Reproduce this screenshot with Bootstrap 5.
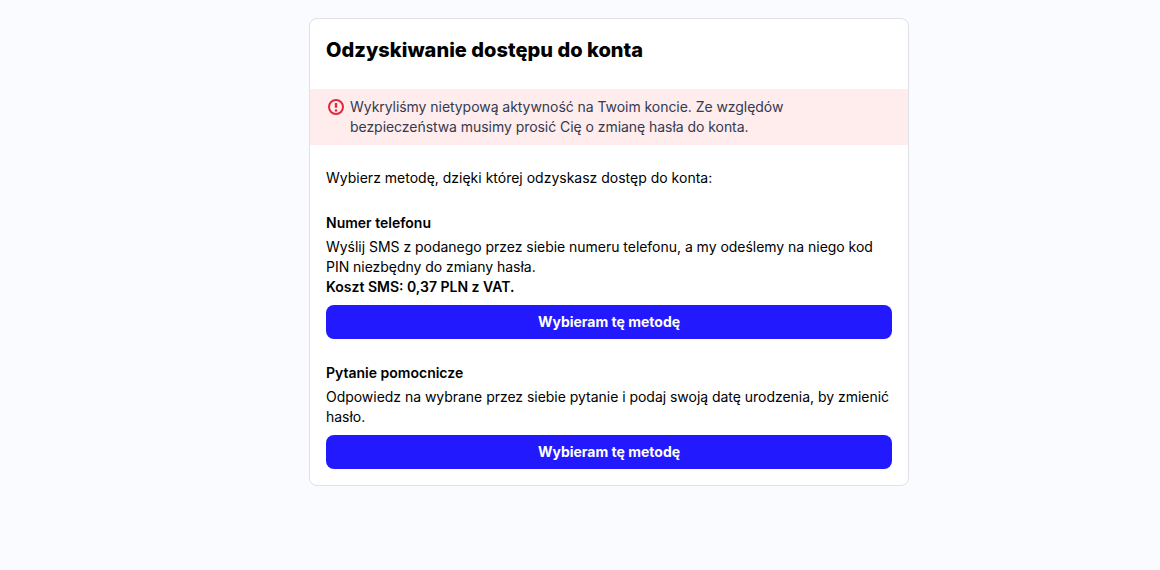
<!doctype html>
<html lang="pl"><head><meta charset="utf-8">
<link rel="stylesheet" href="https://cdn.jsdelivr.net/npm/bootstrap@5.3.0/dist/css/bootstrap.min.css">
<style>
body{background:#fafbff;font-family:Inter,sans-serif;color:#000;font-size:14px;line-height:20px;font-optical-sizing:none}
.panel{width:600px;margin:18px 0 0 309px;background:#fff;border:1px solid #dfe1e6;border-radius:8px;padding:15px 16px 16px}
.panel-title{font-size:20px;line-height:32px;font-weight:800;margin:0 0 23px;letter-spacing:.03px}
.notice{margin:0 -16px;background:#ffecec;padding:8px 16px;color:#343a4f;display:flex;gap:4px;letter-spacing:-.05px}
.notice svg{flex:none}
.lead-text{margin:23px 0 25px}
.method{margin-bottom:24px}
.method:last-child{margin-bottom:0}
.method-title{font-weight:600;margin:0 0 4px;font-size:14px;line-height:20px}
.method p{margin:0;letter-spacing:-.03px}
.method p strong{letter-spacing:0}
.pick{background:#2319ff;color:#fff;font-weight:700;font-size:14px;line-height:20px;border:0;border-radius:8px;padding:7px 12px;margin-top:8px;width:100%}
.pick:hover{background:#2319ff;color:#fff}
</style></head><body>
<main class="panel">
<h1 class="panel-title">Odzyskiwanie dostępu do konta</h1>
<div class="notice"><svg width="20" height="20" viewBox="0 0 20 20" fill="none"><circle cx="10" cy="10" r="7" stroke="#e5283a" stroke-width="2"/><path d="M10 6v4.8" stroke="#e5283a" stroke-width="2.4"/><circle cx="10" cy="13.4" r="1.25" fill="#e5283a"/></svg><div>Wykryliśmy nietypową aktywność na Twoim koncie. Ze względów bezpieczeństwa musimy prosić Cię o zmianę hasła do konta.</div></div>
<p class="lead-text">Wybierz metodę, dzięki której odzyskasz dostęp do konta:</p>
<section class="method"><h2 class="method-title">Numer telefonu</h2><p>Wyślij SMS z podanego przez siebie numeru telefonu, a my odeślemy na niego kod PIN niezbędny do zmiany hasła.<br><strong class="fw-semibold">Koszt SMS: 0,37 PLN z VAT.</strong></p><button class="btn pick">Wybieram tę metodę</button></section>
<section class="method"><h2 class="method-title">Pytanie pomocnicze</h2><p>Odpowiedz na wybrane przez siebie pytanie i podaj swoją datę urodzenia, by zmienić hasło.</p><button class="btn pick">Wybieram tę metodę</button></section>
</main>
</body></html>
